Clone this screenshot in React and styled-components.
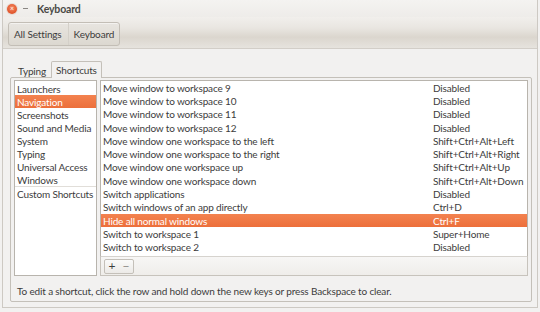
import React from 'react'
import styled, { createGlobalStyle } from 'styled-components'

const Global = createGlobalStyle`
  html, body {
    margin: 0;
    padding: 0;
    background: #f2f1f0;
  }
  body {
    font-family: Lato, "Open Sans", sans-serif;
    font-size: 10px;
    letter-spacing: -0.15px;
    color: #3c3c3c;
  }
`

const Window = styled.div`
  width: 536px;
  height: 308px;
  margin-left: 2px;
  box-sizing: border-box;
  border-left: 1px solid #cdc9c3;
  border-right: 1px solid #cdc9c3;
  border-bottom: 1px solid #cdc9c3;
  background: #f2f1f0;
  display: flex;
  flex-direction: column;
`

const TitleBar = styled.div`
  height: 17px;
  display: flex;
  align-items: center;
  padding-left: 4px;
  background: linear-gradient(#f4f3f1, #eeece9);
`

const CloseButton = styled.div`
  width: 10px;
  height: 10px;
  border-radius: 50%;
  background: radial-gradient(circle at 50% 40%, #f58a63, #e0542a 70%, #c94a24);
  box-shadow: 0 0 0 1px #e7dcd6;
  display: flex;
  align-items: center;
  justify-content: center;
  color: #fff3ee;
  font-size: 7px;
  line-height: 1;
`

const Minimize = styled.div`
  width: 5px;
  height: 1px;
  background: #8a8783;
  margin-left: 6px;
`

const Title = styled.div`
  margin-left: 9px;
  font-weight: 700;
  font-size: 10.5px;
  color: #4a4945;
`

const Toolbar = styled.div`
  height: 32px;
  box-sizing: border-box;
  display: flex;
  align-items: center;
  padding: 2px 0 0 5px;
  border-bottom: 1px solid #d2cec8;
  background: linear-gradient(#f1efec 0%, #e9e6e1 35%, #dbd6ce 65%, #e6e3de 100%);
`

const ButtonGroup = styled.div`
  display: flex;
  height: 22px;
  border: 1px solid #c3beb6;
  border-radius: 3px;
  background: linear-gradient(#e8e5e0, #dcd8d0);
  box-shadow: inset 0 1px 0 rgba(255, 255, 255, 0.5);
`

const CrumbButton = styled.div`
  display: flex;
  align-items: center;
  padding: 0 ${p => (p.last ? '5px' : '6px')} 0 ${p => (p.last ? '5px' : '5px')};
  color: #3c3c3c;
  border-left: ${p => (p.last ? '1px solid #d4d0c9' : 'none')};
`

const Body = styled.div`
  flex: 1;
  display: flex;
  flex-direction: column;
  padding: 10px 5px 5px 7px;
`

const TabRow = styled.div`
  display: flex;
  align-items: flex-end;
  height: 18px;
  padding-left: 3px;
`

const Tab = styled.div`
  height: ${p => (p.active ? '17px' : '15px')};
  box-sizing: border-box;
  display: flex;
  align-items: center;
  padding: 0 4px;
  margin-bottom: -1px;
  border: 1px solid ${p => (p.active ? '#c4c0b9' : 'transparent')};
  border-bottom: none;
  border-radius: 2px 2px 0 0;
  background: ${p => (p.active ? '#f2f1f0' : 'transparent')};
  position: relative;
  z-index: 1;
`

const Panel = styled.div`
  flex: 1;
  border: 1px solid #c4c0b9;
  border-radius: 2px;
  padding: 2px 3px 0 3px;
  display: flex;
  flex-direction: column;
`

const Lists = styled.div`
  display: flex;
  gap: 3px;
  height: 196px;
`

const CategoryList = styled.div`
  width: 83px;
  box-sizing: border-box;
  border: 1px solid #b8b4ad;
  background: #fff;
  padding-top: 1px;
`

const Row = styled.div`
  height: ${p => p.h || '13px'};
  display: flex;
  align-items: center;
  padding-left: ${p => p.pad || '2px'};
  white-space: nowrap;
  color: ${p => (p.selected ? '#fff' : '#3c3c3c')};
  background: ${p => (p.selected ? 'linear-gradient(#f3824f, #ec6f3b)' : 'transparent')};
`

const Divider = styled.div`
  height: 1px;
  background: #e1ded9;
`

const ShortcutColumn = styled.div`
  flex: 1;
  display: flex;
  flex-direction: column;
`

const ShortcutList = styled.div`
  height: 177px;
  box-sizing: border-box;
  border: 1px solid #b8b4ad;
  border-bottom: 1px solid #d6d3ce;
  background: #fff;
`

const ShortcutName = styled.span`
  width: 330px;
`

const ListToolbar = styled.div`
  height: 19px;
  box-sizing: border-box;
  border: 1px solid #c7c3bc;
  border-top: none;
  background: linear-gradient(#f7f6f5, #efedea);
  display: flex;
  align-items: center;
  padding-left: 3px;
`

const SmallButtons = styled.div`
  display: flex;
  height: 13px;
  border: 1px solid #c4c0b9;
  border-radius: 2px;
  background: linear-gradient(#fafaf9, #eceae7);
`

const SmallButton = styled.div`
  width: 14px;
  display: flex;
  align-items: center;
  justify-content: center;
  font-size: 12px;
  line-height: 1;
  color: ${p => (p.dim ? '#8c8a86' : '#3c3c3c')};
`

const Hint = styled.div`
  margin-top: 9px;
  padding-left: 3px;
  white-space: nowrap;
`

const categories = [
  'Launchers',
  'Navigation',
  'Screenshots',
  'Sound and Media',
  'System',
  'Typing',
  'Universal Access',
  'Windows',
]

const shortcuts = [
  ['Move window to workspace 9', 'Disabled'],
  ['Move window to workspace 10', 'Disabled'],
  ['Move window to workspace 11', 'Disabled'],
  ['Move window to workspace 12', 'Disabled'],
  ['Move window one workspace to the left', 'Shift+Ctrl+Alt+Left'],
  ['Move window one workspace to the right', 'Shift+Ctrl+Alt+Right'],
  ['Move window one workspace up', 'Shift+Ctrl+Alt+Up'],
  ['Move window one workspace down', 'Shift+Ctrl+Alt+Down'],
  ['Switch applications', 'Disabled'],
  ['Switch windows of an app directly', 'Ctrl+D'],
  ['Hide all normal windows', 'Ctrl+F'],
  ['Switch to workspace 1', 'Super+Home'],
  ['Switch to workspace 2', 'Disabled'],
]

const App = () => {
  return (
    <>
      <Global />
      <Window>
        <TitleBar>
          <CloseButton>×</CloseButton>
          <Minimize />
          <Title>Keyboard</Title>
        </TitleBar>
        <Toolbar>
          <ButtonGroup>
            <CrumbButton>All Settings</CrumbButton>
            <CrumbButton last>Keyboard</CrumbButton>
          </ButtonGroup>
        </Toolbar>
        <Body>
          <TabRow>
            <Tab>Typing</Tab>
            <Tab active>Shortcuts</Tab>
          </TabRow>
          <Panel>
            <Lists>
              <CategoryList>
                {categories.map(c => (
                  <Row key={c} selected={c === 'Navigation'}>{c}</Row>
                ))}
                <Divider />
                <Row h="14px">Custom Shortcuts</Row>
              </CategoryList>
              <ShortcutColumn>
                <ShortcutList>
                  {shortcuts.map(([name, keys]) => (
                    <Row key={name} h="13.3px" selected={name === 'Hide all normal windows'}>
                      <ShortcutName>{name}</ShortcutName>
                      <span>{keys}</span>
                    </Row>
                  ))}
                </ShortcutList>
                <ListToolbar>
                  <SmallButtons>
                    <SmallButton>+</SmallButton>
                    <SmallButton dim>−</SmallButton>
                  </SmallButtons>
                </ListToolbar>
              </ShortcutColumn>
            </Lists>
            <Hint>
              To edit a shortcut, click the row and hold down the new keys or press Backspace to clear.
            </Hint>
          </Panel>
        </Body>
      </Window>
    </>
  )
}

export default App
